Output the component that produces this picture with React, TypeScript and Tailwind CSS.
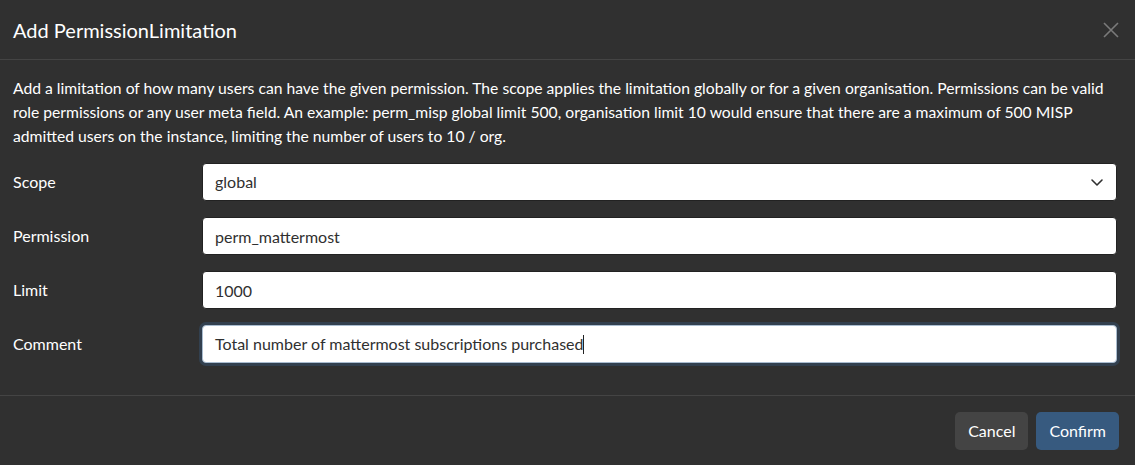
import type { ReactNode } from 'react'

// Darkly-ish palette pulled from the screenshot
const FONT = { fontFamily: 'Lato, "Open Sans", sans-serif' }

// ─── Bits ─────────────────────────────────────────────────────────────────────

function Row({ label, children }: { label: string; children: ReactNode }) {
  return (
    <div className="flex items-center gap-3 mb-4">
      <label className="w-[177px] shrink-0 text-base text-white">{label}</label>
      <div className="flex-1 relative">{children}</div>
    </div>
  )
}

const fieldCls =
  'block w-full h-[38px] px-3 rounded-[4px] bg-white border border-[#222] text-base text-[#303030] outline-none'

function Chevron() {
  return (
    <svg
      className="absolute right-[13px] top-1/2 -translate-y-1/2 pointer-events-none"
      width="14" height="10" viewBox="0 0 14 10" fill="none"
      aria-hidden
    >
      <path d="M2 3l5 5 5-5" stroke="#303030" strokeWidth="1.6" strokeLinecap="round" strokeLinejoin="round" />
    </svg>
  )
}

// ─── Component ────────────────────────────────────────────────────────────────

export default function App() {
  return (
    <div className="w-[1135px] h-[465px] bg-[#303030] text-white overflow-hidden" style={FONT}>
      {/* ── Header ── */}
      <div className="h-[60px] flex items-center justify-between pl-[13px] pr-4 border-b border-[#444]">
        <h5 className="text-[20px] font-normal leading-none">Add PermissionLimitation</h5>
        <button className="w-4 h-4 flex items-center justify-center" aria-label="Close">
          <svg width="16" height="16" viewBox="0 0 16 16" aria-hidden>
            <path d="M1 1l14 14M15 1L1 15" stroke="#7a7a7a" strokeWidth="1.6" />
          </svg>
        </button>
      </div>

      {/* ── Body ── */}
      <div className="pl-[13px] pr-[18px] pt-4 pb-[16px] border-b border-[#444]">
        <p className="text-[15.7px] leading-6 mb-[15px]">
          Add a limitation of how many users can have the given permission. The scope applies the limitation
          globally or for a given organisation. Permissions can be valid role permissions or any user meta field. An
          example: perm_misp global limit 500, organisation limit 10 would ensure that there are a maximum of 500 MISP
          admitted users on the instance, limiting the number of users to 10 / org.
        </p>

        <Row label="Scope">
          <select className={`${fieldCls} appearance-none`} defaultValue="global" style={FONT}>
            <option value="global">global</option>
            <option value="organisation">organisation</option>
          </select>
          <Chevron />
        </Row>
        <Row label="Permission">
          <input className={fieldCls} defaultValue="perm_mattermost" style={FONT} />
        </Row>
        <Row label="Limit">
          <input className={fieldCls} defaultValue="1000" style={FONT} />
        </Row>
        <Row label="Comment">
          {/* Focused field with caret */}
          <div className="h-[38px] flex items-center px-3 rounded-[4px] bg-white border border-[#a9bccf] ring-[3px] ring-[#375a7f]/40 text-base text-[#303030]">
            Total number of mattermost subscriptions purchased
            <span className="inline-block w-px h-[19px] bg-[#222]" />
          </div>
        </Row>
      </div>

      {/* ── Footer ── */}
      <div className="flex justify-end gap-2 pt-4 pr-4">
        <button className="h-[38px] px-[13px] rounded-[5px] bg-[#444] text-base text-white">Cancel</button>
        <button className="h-[38px] px-[13px] rounded-[5px] bg-[#375a7f] text-base text-white">Confirm</button>
      </div>
    </div>
  )
}
